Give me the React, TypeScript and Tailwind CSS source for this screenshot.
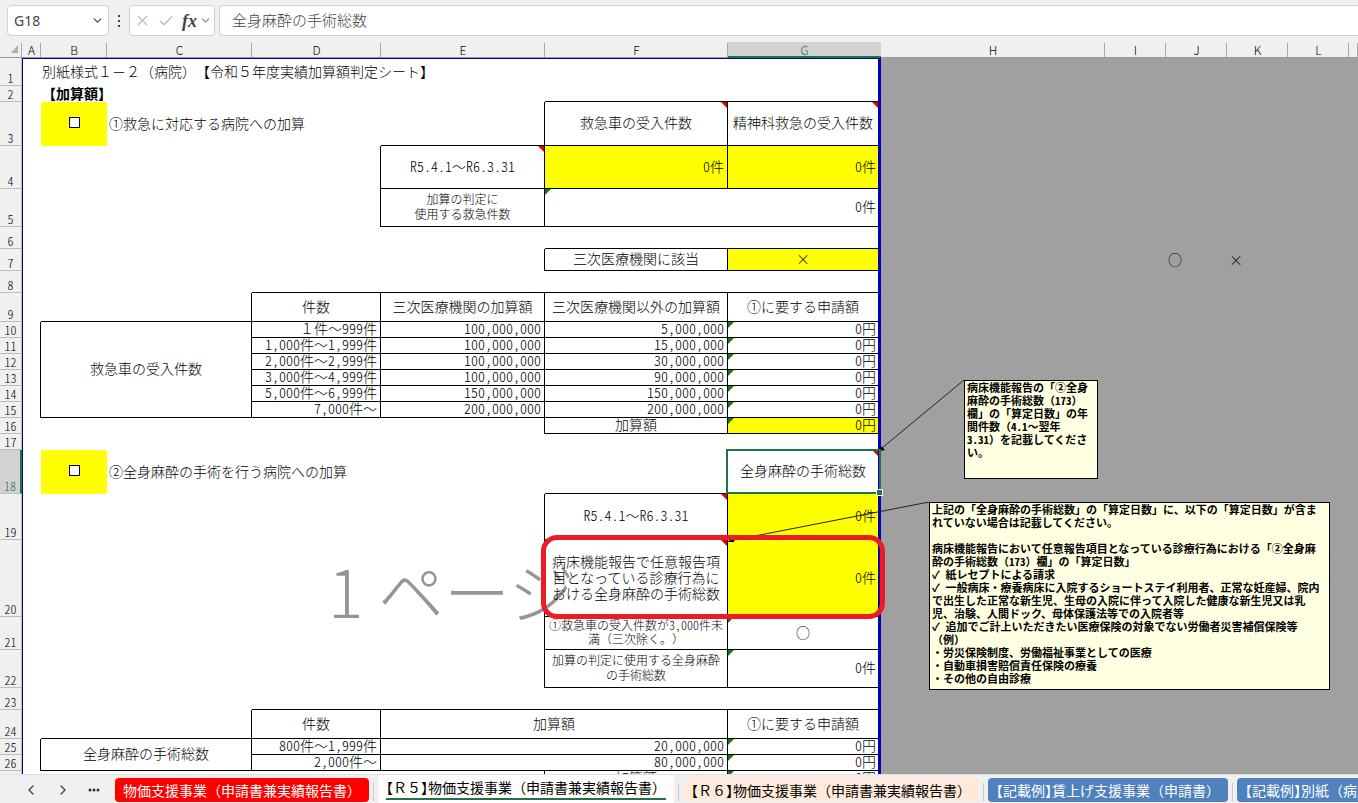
import { Children, ReactNode } from 'react';
import { Check, ChevronDown, ChevronLeft, ChevronRight, X } from 'lucide-react';

// ASCII runs take half-width glyphs, everything else stays full width
function half(node: ReactNode) {
    if (typeof node !== 'string') return node;
    return node.split(/([\x21-\x7e]+)/).map((part, i) =>
        i % 2 ? <span key={i} className="[font-feature-settings:'hwid']">{part}</span> : part
    );
}

type CellProps = {
    span?: number;
    rows?: number;
    r?: boolean;
    b?: boolean;
    mark?: 'note' | 'formula';
    className?: string;
    children?: ReactNode;
};

function Cell({ span, rows, r, b, mark, className = 'text-center', children }: CellProps) {
    return (
        <td
            colSpan={span}
            rowSpan={rows}
            className={`relative border-black p-0 pb-[3px] whitespace-nowrap ${r ? 'border-r' : ''} ${b ? 'border-b' : ''} ${className}`}
        >
            {Children.map(children, half)}
            {mark === 'note' && (
                <svg className="absolute top-0 right-0" width="6" height="6" aria-hidden="true">
                    <path d="M0 0H6V6Z" fill="#e00000" />
                </svg>
            )}
            {mark === 'formula' && (
                <svg className="absolute top-0 left-0" width="6" height="6" aria-hidden="true">
                    <path d="M0 0H6L0 6Z" fill="#107c10" />
                </svg>
            )}
        </td>
    );
}

// Row number, blank column A and the grey area right of the print range
function Row({ n, h, active, aRight, outside, children }: { n: number; h: string; active?: boolean; aRight?: boolean; outside?: ReactNode; children: ReactNode }) {
    return (
        <tr className={h}>
            <th
                scope="row"
                className={`border-b border-b-[#bdbdbd] p-0 align-bottom text-[12px] leading-[14px] font-light [font-feature-settings:'hwid'] ${
                    active ? 'border-r-2 border-r-[#217346] bg-[#d2d2d2] text-[#217346]' : 'border-r border-r-[#bdbdbd] bg-[#f0f0f0]'
                }`}
            >
                {n}
            </th>
            <td className={`border-l border-l-[#0000a8] p-0 ${aRight ? 'border-r border-r-black' : ''} ${n === 1 ? 'border-t border-t-[#0000a8]' : ''}`} />
            {children}
            {outside ?? <td colSpan={6} className="bg-[#a0a0a0] p-0" />}
        </tr>
    );
}

const G = 'border-r-3 border-r-[#0000b8]';
const LEFT = 'text-left pl-[2px]';
const RIGHT = 'text-right pr-[3px]';
const G_RIGHT = 'border-r-3 border-r-[#0000b8] text-right pr-[2px]';
const G_CENTER = 'border-r-3 border-r-[#0000b8] text-center';
const G_INPUT = 'border-r-3 border-r-[#0000b8] bg-[#ffff00] text-right pr-[2px]';
const SMALL = 'text-center text-[12px] leading-[15px]';

const COLUMNS = ['A', 'B', 'C', 'D', 'E', 'F', 'G', 'H', 'I', 'J', 'K', 'L', ''];

const AMBULANCE = [
    ['１件～999件', '100,000,000', '5,000,000'],
    ['1,000件～1,999件', '100,000,000', '15,000,000'],
    ['2,000件～2,999件', '100,000,000', '30,000,000'],
    ['3,000件～4,999件', '100,000,000', '90,000,000'],
    ['5,000件～6,999件', '150,000,000', '150,000,000'],
    ['7,000件～', '200,000,000', '200,000,000'],
];

const NOTE_SURGERY = ['病床機能報告の「②全身', '麻酔の手術総数（173）', '欄」の「算定日数」の年', '間件数（4.1～翌年', '3.31）を記載してくださ', 'い。'];

const NOTE_OPTIONAL = [
    '上記の「全身麻酔の手術総数」の「算定日数」に、以下の「算定日数」が含ま',
    'れていない場合は記載してください。',
    '',
    '病床機能報告において任意報告項目となっている診療行為における「②全身麻',
    '酔の手術総数（173）欄」の「算定日数」',
    '✓\u2002紙レセプトによる請求',
    '✓\u2002一般病床・療養病床に入院するショートステイ利用者、正常な妊産婦、院内',
    'で出生した正常な新生児、生母の入院に伴って入院した健康な新生児又は乳',
    '児、治験、人間ドック、母体保護法等での入院者等',
    '✓\u2002追加でご計上いただきたい医療保険の対象でない労働者災害補償保険等',
    '（例）',
    '・労災保険制度、労働福祉事業としての医療',
    '・自動車損害賠償責任保険の療養',
    '・その他の自由診療',
];

function Tick({ label }: { label: string }) {
    return <input type="checkbox" aria-label={label} className="mx-auto block h-[11px] w-[11px] appearance-none border border-black bg-white" />;
}

function Note({ lines, className }: { lines: string[]; className: string }) {
    return (
        <div className={`absolute border border-black bg-[#ffffe1] pl-[2px] text-[11px] leading-[13px] font-bold whitespace-pre ${className}`}>
            {lines.map((line, i) => (
                <p key={i} className="h-[13px]">{half(line)}</p>
            ))}
        </div>
    );
}

function FormulaBar() {
    return (
        <div className="flex h-[38px] shrink-0 items-start bg-[#f0f0f0] pt-[5px] pl-[7px] text-[#444]">
            <div className="flex h-[31px] w-[102px] items-center rounded border border-[#d0d0d0] bg-white pr-1 pl-[6px]">
                <input aria-label="名前ボックス" defaultValue="G18" className="w-0 flex-1 font-['Noto_Sans',sans-serif] text-[14px] outline-none" />
                <button aria-label="名前の一覧"><ChevronDown size={13} /></button>
            </div>
            <svg width="20" height="31" aria-hidden="true" fill="#444">
                <rect x="9" y="10" width="2" height="2" />
                <rect x="9" y="15" width="2" height="2" />
                <rect x="9" y="20" width="2" height="2" />
            </svg>
            <div className="flex h-[31px] w-[86px] items-center rounded border border-[#d0d0d0] bg-white pl-1">
                <button aria-label="キャンセル" className="text-[#b8b8b8]"><X size={17} strokeWidth={1.5} /></button>
                <button aria-label="入力" className="ml-[6px] text-[#b8b8b8]"><Check size={18} strokeWidth={1.5} /></button>
                <button aria-label="関数の挿入" className="ml-[7px] font-['Liberation_Serif',serif] text-[18px] leading-[20px] font-bold italic">fx</button>
                <button aria-label="関数の一覧" className="ml-[2px] text-[#888]"><ChevronDown size={13} /></button>
            </div>
            <input
                aria-label="数式バー"
                defaultValue="全身麻酔の手術総数"
                className="ml-1 h-[31px] min-w-0 flex-1 rounded-l border border-r-0 border-[#d0d0d0] bg-white pb-[3px] pl-3 text-[15px] font-light outline-none"
            />
        </div>
    );
}

function ColumnHeads() {
    return (
        <thead>
            <tr className="h-[20px]">
                <th className="border-b border-[#999] bg-[#f0f0f0] bg-[linear-gradient(#aaa,#aaa)] bg-[length:1px_14px] bg-right-bottom bg-no-repeat p-0">
                    <svg className="ml-[11px]" width="8" height="14" aria-hidden="true">
                        <path d="M7 4V12H0Z" fill="#b0b0b0" />
                    </svg>
                </th>
                {COLUMNS.map((c) => (
                    <th
                        key={c}
                        scope="col"
                        className={`bg-[#f0f0f0] bg-right-bottom bg-no-repeat p-0 text-[12px] leading-[13px] font-light ${
                            c === 'G'
                                ? 'border-b-2 border-[#217346] bg-[linear-gradient(#d2d2d2,#d2d2d2)] bg-[length:100%_14px] pt-[4px] text-[#217346]'
                                : 'border-b border-[#999] bg-[linear-gradient(#aaa,#aaa)] bg-[length:1px_14px] pt-[4px]'
                        }`}
                    >
                        {c}
                    </th>
                ))}
            </tr>
        </thead>
    );
}

function SheetTable() {
    return (
        <table className="relative w-full table-fixed border-separate border-spacing-0 text-[14px] leading-[12px]">
            <colgroup>
                <col className="w-[22px]" />
                <col className="w-[19px]" />
                <col className="w-[66px]" />
                <col className="w-[145px]" />
                <col className="w-[129px]" />
                <col className="w-[164px]" />
                <col className="w-[183px]" />
                <col className="w-[153px]" />
                <col className="w-[224px]" />
                <col className="w-[61px]" />
                <col className="w-[61px]" />
                <col className="w-[61px]" />
                <col className="w-[61px]" />
                <col />
            </colgroup>
            <ColumnHeads />
            <tbody>
                <Row n={1} h="h-[28px]">
                    <Cell span={5} className="border-t border-t-[#0000a8] pl-px text-left">別紙様式１－２（病院）【令和５年度実績加算額判定シート】</Cell>
                    <Cell className="border-t border-t-[#0000a8] border-r-3 border-r-[#0000b8]" />
                </Row>
                <Row n={2} h="h-[16px]">
                    <Cell span={4} className="pl-px text-left font-bold">【加算額】</Cell>
                    <Cell b />
                    <Cell b className={G} />
                </Row>
                <Row n={3} h="h-[44px]">
                    <Cell className="bg-[#ffff00]"><Tick label="①救急に対応する病院への加算" /></Cell>
                    <Cell span={2} className={LEFT}>①救急に対応する病院への加算</Cell>
                    <Cell r b />
                    <Cell r b mark="note">救急車の受入件数</Cell>
                    <Cell b mark="note" className={G_CENTER}>精神科救急の受入件数</Cell>
                </Row>
                <Row n={4} h="h-[43px]">
                    <Cell span={3} r />
                    <Cell r b mark="note">R5.4.1～R6.3.31</Cell>
                    <Cell r b className="bg-[#ffff00] pr-[3px] text-right">0件</Cell>
                    <Cell b className={G_INPUT}>0件</Cell>
                </Row>
                <Row n={5} h="h-[38px]">
                    <Cell span={3} r />
                    <Cell r b className={SMALL}>加算の判定に<br />使用する救急件数</Cell>
                    <Cell span={2} b mark="formula" className={G_RIGHT}>0件</Cell>
                </Row>
                <Row n={6} h="h-[22px]">
                    <Cell span={4} />
                    <Cell b />
                    <Cell b className={G} />
                </Row>
                <Row
                    n={7}
                    h="h-[22px]"
                    outside={
                        <>
                            <td colSpan={2} className="bg-[#a0a0a0] p-0" />
                            <td className="bg-[#a0a0a0] p-0 pb-[2px] pl-[2px]">○</td>
                            <td className="bg-[#a0a0a0] p-0 pb-[2px] pl-[2px]">×</td>
                            <td colSpan={2} className="bg-[#a0a0a0] p-0" />
                        </>
                    }
                >
                    <Cell span={4} r />
                    <Cell r b>三次医療機関に該当</Cell>
                    <Cell b className="border-r-3 border-r-[#0000b8] bg-[#ffff00] text-center">×</Cell>
                </Row>
                <Row n={8} h="h-[22px]">
                    <Cell span={2} />
                    <Cell span={4} b className={G} />
                </Row>
                <Row n={9} h="h-[29px]">
                    <Cell span={2} r b />
                    <Cell r b>件数</Cell>
                    <Cell r b>三次医療機関の加算額</Cell>
                    <Cell r b>三次医療機関以外の加算額</Cell>
                    <Cell b className={G_CENTER}>①に要する申請額</Cell>
                </Row>
                {AMBULANCE.map(([range, tertiary, other], i) => (
                    <Row key={range} n={10 + i} h="h-[16px]" aRight>
                        {i === 0 && <Cell span={2} rows={6} r b>救急車の受入件数</Cell>}
                        <Cell r b className={RIGHT}>{range}</Cell>
                        <Cell r b className={RIGHT}>{tertiary}</Cell>
                        <Cell r b className={RIGHT}>{other}</Cell>
                        <Cell b mark="formula" className={G_RIGHT}>0円</Cell>
                    </Row>
                ))}
                <Row n={16} h="h-[16px]">
                    <Cell span={4} r />
                    <Cell r b>加算額</Cell>
                    <Cell b mark="formula" className={G_INPUT}>0円</Cell>
                </Row>
                <Row n={17} h="h-[16px]">
                    <Cell span={6} className={G} />
                </Row>
                <Row n={18} h="h-[44px]" active>
                    <Cell className="bg-[#ffff00]"><Tick label="②全身麻酔の手術を行う病院への加算" /></Cell>
                    <Cell span={3} className={LEFT}>②全身麻酔の手術を行う病院への加算</Cell>
                    <Cell b />
                    <Cell b mark="note" className={G_CENTER}>
                        全身麻酔の手術総数
                        <span className="absolute -top-px -right-[3px] -bottom-px -left-[2px] z-10 border-2 border-[#217346]" />
                        <span className="absolute -right-[4px] -bottom-[2px] z-10 h-[5px] w-[5px] bg-[#217346] outline outline-white" />
                    </Cell>
                </Row>
                <Row n={19} h="h-[46px]">
                    <Cell span={4} r />
                    <Cell r b mark="note">R5.4.1～R6.3.31</Cell>
                    <Cell b className={G_INPUT}>0件</Cell>
                </Row>
                <Row n={20} h="h-[77px]">
                    <Cell span={4} r />
                    <Cell r b mark="note" className="text-center leading-[16px]">
                        病床機能報告で任意報告項<br />目となっている診療行為に<br />おける全身麻酔の手術総数
                    </Cell>
                    <Cell b className={G_INPUT}>0件</Cell>
                </Row>
                <Row n={21} h="h-[33px]">
                    <Cell span={4} r />
                    <Cell r b className="text-center text-[12px] leading-[14px]">①救急車の受入件数が3,000件未<br />満（三次除く。）</Cell>
                    <Cell b mark="formula" className={G_CENTER}>○</Cell>
                </Row>
                <Row n={22} h="h-[38px]">
                    <Cell span={4} r />
                    <Cell r b className={SMALL}>加算の判定に使用する全身麻酔<br />の手術総数</Cell>
                    <Cell b mark="formula" className={G_RIGHT}>0件</Cell>
                </Row>
                <Row n={23} h="h-[22px]">
                    <Cell span={2} />
                    <Cell span={4} b className={G} />
                </Row>
                <Row n={24} h="h-[29px]">
                    <Cell span={2} r b />
                    <Cell r b>件数</Cell>
                    <Cell span={2} r b>加算額</Cell>
                    <Cell b className={G_CENTER}>①に要する申請額</Cell>
                </Row>
                <Row n={25} h="h-[16px]" aRight>
                    <Cell span={2} rows={2} r b>全身麻酔の手術総数</Cell>
                    <Cell r b className={RIGHT}>800件～1,999件</Cell>
                    <Cell span={2} r b className={RIGHT}>20,000,000</Cell>
                    <Cell b mark="formula" className={G_RIGHT}>0円</Cell>
                </Row>
                <Row n={26} h="h-[16px]" aRight>
                    <Cell r b className={RIGHT}>2,000件～</Cell>
                    <Cell span={2} r b className={RIGHT}>80,000,000</Cell>
                    <Cell b mark="formula" className={G_RIGHT}>0円</Cell>
                </Row>
                <Row n={27} h="h-[16px]">
                    <Cell span={4} r />
                    <Cell r b>加算額</Cell>
                    <Cell b mark="formula" className={G_RIGHT}>0円</Cell>
                </Row>
            </tbody>
        </table>
    );
}

function Divider() {
    return <span className="mx-1 mt-2 h-[18px] w-px shrink-0 bg-[#c8c8c8]" />;
}

function Bracket({ children }: { children: string }) {
    return (
        <>
            <span className="[font-feature-settings:'halt']">【</span>
            {children}
            <span className="[font-feature-settings:'halt']">】</span>
        </>
    );
}

function SheetTabs() {
    return (
        <nav className="flex h-[29px] shrink-0 items-start overflow-hidden border-t border-[#e0e0e0] bg-[#f0f0f0] text-[14px] leading-[24px] whitespace-nowrap">
            <div className="mt-[3px] flex h-[24px] w-[115px] shrink-0 items-center pl-[23px] text-[#444]">
                <button aria-label="前のシート"><ChevronLeft size={16} /></button>
                <button aria-label="次のシート" className="ml-4"><ChevronRight size={16} /></button>
                <button aria-label="シートの一覧" className="ml-[17px]">
                    <svg width="12" height="4" fill="#333" aria-hidden="true">
                        <circle cx="2" cy="2" r="1.5" />
                        <circle cx="6" cy="2" r="1.5" />
                        <circle cx="10" cy="2" r="1.5" />
                    </svg>
                </button>
            </div>
            <button className="mt-[3px] shrink-0 rounded bg-[#ff0000] px-2 text-white">物価支援事業（申請書兼実績報告書）</button>
            <Divider />
            <button className="flex h-[29px] shrink-0 items-start rounded-b bg-[#fffdfb] px-2">
                <span className="block h-[25px] border-b-2 border-[#217346]"><Bracket>Ｒ５</Bracket>物価支援事業（申請書兼実績報告書）</span>
            </button>
            <Divider />
            <button className="mt-[3px] shrink-0 rounded bg-[#fdeadb] px-2"><Bracket>Ｒ６</Bracket>物価支援事業（申請書兼実績報告書）</button>
            <Divider />
            <button className="mt-[3px] shrink-0 rounded bg-[#4f81bd] px-2 text-white"><Bracket>記載例</Bracket>賃上げ支援事業（申請書）</button>
            <Divider />
            <button className="mt-[3px] shrink-0 rounded bg-[#4f81bd] px-2 text-white"><Bracket>記載例</Bracket>別紙（病院）</button>
        </nav>
    );
}

export default function App() {
    return (
        <div className="flex h-screen flex-col overflow-hidden bg-white font-['Noto_Sans_CJK_JP',sans-serif] text-black [text-spacing-trim:space-all]">
            <FormulaBar />
            <main className="relative min-h-0 flex-1 overflow-hidden font-light">
                <div className="absolute top-[503px] left-[328px] text-[66px] leading-[96px] whitespace-pre text-[#969696]">1 ページ</div>
                <SheetTable />
                <svg className="absolute top-0 left-0" width="1000" height="560" stroke="#222" fill="none" aria-hidden="true">
                    <path d="M964 342L882 410M929 464L729 503" />
                    <path d="M880 413L881 408L885 412ZM727 504L734 500V504Z" fill="#000" stroke="none" />
                </svg>
                <div className="absolute top-[497px] left-[541px] h-[84px] w-[344px] rounded-[16px] border-5 border-[#ed1c24]" />
                <Note lines={NOTE_SURGERY} className="top-[342px] left-[964px] h-[99px] w-[134px]" />
                <Note lines={NOTE_OPTIONAL} className="top-[464px] left-[929px] h-[188px] w-[401px]" />
            </main>
            <SheetTabs />
        </div>
    );
}
